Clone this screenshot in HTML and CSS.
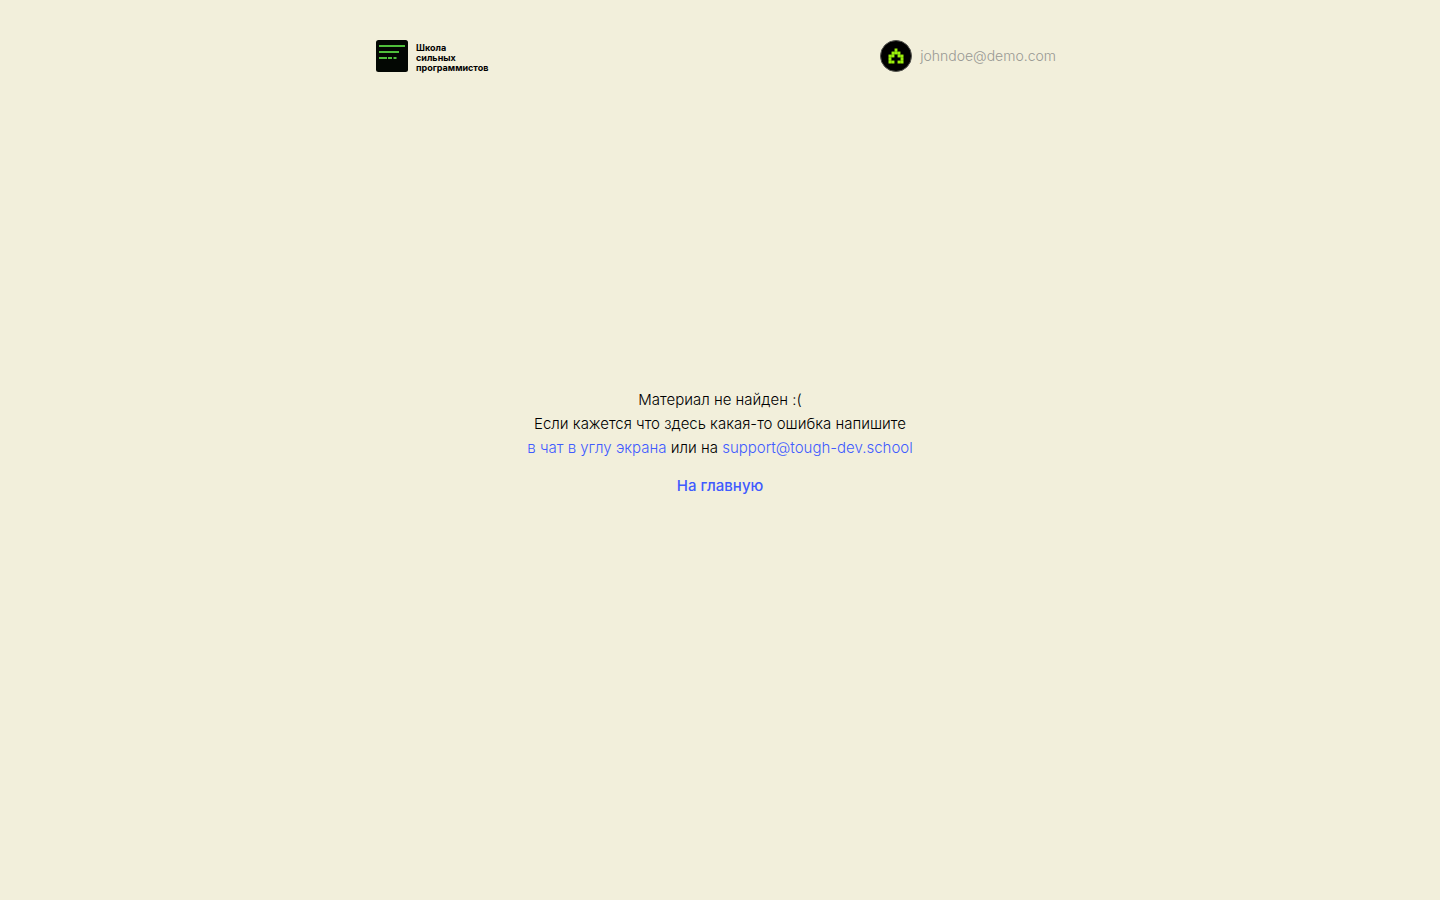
FILE: index.html
```html
<!DOCTYPE html>
<html lang="ru">
<head>
<meta charset="utf-8">
<meta name="viewport" content="width=device-width, initial-scale=1">
<title>Школа сильных программистов</title>
<link rel="stylesheet" href="styles.css">
</head>
<body>
<div class="page">
  <header class="header">
    <a class="logo" href="#">
      <svg class="logo-mark" viewBox="0 0 32 32" aria-hidden="true">
        <rect width="32" height="32" rx="2.500" fill="#030703"/>
        <path d="M3 6h26M3 12h20M3 18h8M12 18h4M17.500 18h3" stroke="#4fbf3b" stroke-width="2"/>
      </svg>
      <span class="logo-text">Школа<br>сильных<br>программистов</span>
    </a>
    <button class="profile" type="button">
      <svg class="avatar" viewBox="0 0 32 32" aria-hidden="true">
        <circle cx="16" cy="16" r="15.500" fill="#000" stroke="#55554f"/>
        <path d="M14.500 8.500h3v3h3v3h3v9h-6v-3h3v-3h-3v-3h-3v3h-3v3h3v3h-6v-9h3v-3h3z" fill="#9bf00b"/>
        <path d="M8 11.500h16M8 14.500h16M8 17.500h16M8 20.500h16M11.500 8v16M14.500 8v16M17.500 8v16M20.500 8v16" stroke="#000" stroke-opacity=".3" stroke-width=".4"/>
      </svg>
      <span>johndoe@demo.com</span>
    </button>
  </header>
  <main class="main">
    <p class="message">Материал не найден :(<br>Если кажется что здесь какая-то ошибка напишите<br><a href="#chat">в чат в углу экрана</a> или на <a href="mailto:support@tough-dev.school">support@tough-dev.school</a></p>
    <a class="home" href="#">На главную</a>
  </main>
</div>
</body>
</html>
```
FILE: styles.css
```css
* { box-sizing: border-box; }
body {
  margin: 0;
  background: #f2efdb;
  color: #000;
  font: 350 15px/24px Inter, "Liberation Sans", sans-serif;
}
a { color: #3f5bff; text-decoration: none; }
.page {
  display: flex;
  flex-direction: column;
  min-height: 100vh;
  max-width: 704px;
  margin: 0 auto;
  padding: 0 8px;
}
.header {
  display: flex;
  justify-content: space-between;
  align-items: flex-start;
  padding: 40px 0;
}
.logo { display: flex; gap: 8px; color: #000; }
.logo-mark, .avatar { width: 32px; height: 32px; flex: none; }
.logo-text { padding-top: 3px; font: 700 9px/10px Inter, sans-serif; }
.profile {
  display: flex;
  align-items: center;
  gap: 8px;
  padding: 0 8px 0 0;
  border: 0;
  background: none;
  color: #999994;
  font: 300 14px/20px Inter, sans-serif;
}
.main {
  flex: 1;
  display: flex;
  flex-direction: column;
  align-items: center;
  justify-content: center;
  gap: 14px;
  padding-bottom: 128px;
  text-align: center;
}
.message { margin: 0; }
.home { font-weight: 500; }
```
